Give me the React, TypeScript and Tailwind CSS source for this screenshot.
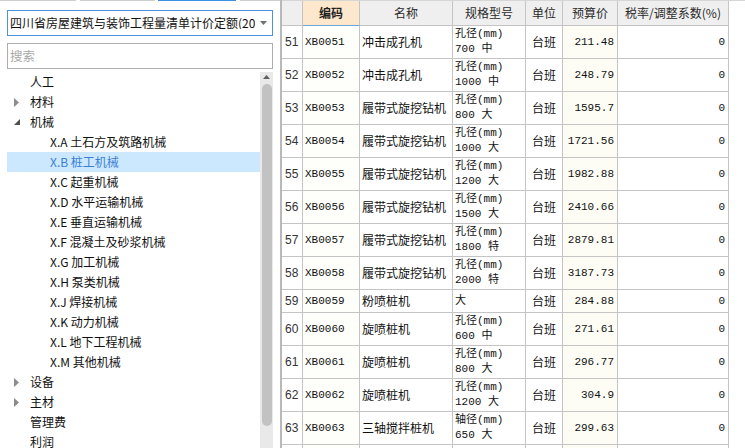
import React from "react";

const cjk = "font-['Noto_Sans_CJK_SC',sans-serif]";
const mono = "font-['Liberation_Mono','Noto_Sans_CJK_SC',monospace]";

type TreeItem = { label: string; level: 1 | 2; arrow?: "closed" | "open"; selected?: boolean };

const tree: TreeItem[] = [
  { label: "人工", level: 1 },
  { label: "材料", level: 1, arrow: "closed" },
  { label: "机械", level: 1, arrow: "open" },
  { label: "X.A 土石方及筑路机械", level: 2 },
  { label: "X.B 桩工机械", level: 2, selected: true },
  { label: "X.C 起重机械", level: 2 },
  { label: "X.D 水平运输机械", level: 2 },
  { label: "X.E 垂直运输机械", level: 2 },
  { label: "X.F 混凝土及砂浆机械", level: 2 },
  { label: "X.G 加工机械", level: 2 },
  { label: "X.H 泵类机械", level: 2 },
  { label: "X.J 焊接机械", level: 2 },
  { label: "X.K 动力机械", level: 2 },
  { label: "X.L 地下工程机械", level: 2 },
  { label: "X.M 其他机械", level: 2 },
  { label: "设备", level: 1, arrow: "closed" },
  { label: "主材", level: 1, arrow: "closed" },
  { label: "管理费", level: 1 },
  { label: "利润", level: 1 },
];

type Row = { no: number; code: string; name: string; spec: string[]; price: string };

const rows: Row[] = [
  { no: 51, code: "XB0051", name: "冲击成孔机", spec: ["孔径(mm)", "700 中"], price: "211.48" },
  { no: 52, code: "XB0052", name: "冲击成孔机", spec: ["孔径(mm)", "1000 中"], price: "248.79" },
  { no: 53, code: "XB0053", name: "履带式旋挖钻机", spec: ["孔径(mm)", "800 大"], price: "1595.7" },
  { no: 54, code: "XB0054", name: "履带式旋挖钻机", spec: ["孔径(mm)", "1000 大"], price: "1721.56" },
  { no: 55, code: "XB0055", name: "履带式旋挖钻机", spec: ["孔径(mm)", "1200 大"], price: "1982.88" },
  { no: 56, code: "XB0056", name: "履带式旋挖钻机", spec: ["孔径(mm)", "1500 大"], price: "2410.66" },
  { no: 57, code: "XB0057", name: "履带式旋挖钻机", spec: ["孔径(mm)", "1800 特"], price: "2879.81" },
  { no: 58, code: "XB0058", name: "履带式旋挖钻机", spec: ["孔径(mm)", "2000 特"], price: "3187.73" },
  { no: 59, code: "XB0059", name: "粉喷桩机", spec: ["大"], price: "284.88" },
  { no: 60, code: "XB0060", name: "旋喷桩机", spec: ["孔径(mm)", "600 中"], price: "271.61" },
  { no: 61, code: "XB0061", name: "旋喷桩机", spec: ["孔径(mm)", "800 大"], price: "296.77" },
  { no: 62, code: "XB0062", name: "旋喷桩机", spec: ["孔径(mm)", "1200 大"], price: "304.9" },
  { no: 63, code: "XB0063", name: "三轴搅拌桩机", spec: ["轴径(mm)", "650 大"], price: "299.63" },
];

const cols = "grid grid-cols-[21px_57px_93px_73px_37px_55px_111px]";
const cell = "border-r border-b border-[#c4c4c4] overflow-hidden whitespace-nowrap";

function Arrow({ kind }: { kind: "closed" | "open" }) {
  if (kind === "closed") {
    return (
      <svg width="5" height="9" viewBox="0 0 5 9" className="block">
        <path d="M0 0 L5 4.5 L0 9 Z" fill="#8c8c8c" />
      </svg>
    );
  }
  return (
    <svg width="6" height="6" viewBox="0 0 6 6" className="block">
      <path d="M6 0 L6 6 L0 6 Z" fill="#505050" />
    </svg>
  );
}

function Sidebar() {
  return (
    <aside className={`flex w-[280px] shrink-0 flex-col ${cjk}`}>
      <div className="flex h-px shrink-0">
        <div className="w-[76px] bg-[#cfcfcf]" />
        <div className="ml-[4px] w-[75px] bg-[#cfcfcf]" />
        <div className="ml-[3px] w-[78px] bg-[#3d8fe4]" />
        <div className="ml-[4px] flex-1 bg-[#cfcfcf]" />
      </div>
      <div className="px-[7px] pt-[9px]">
        <div className="flex h-[26px] items-center border border-[#4d93dc] bg-white pl-[2px] pr-[5px]">
          <span className="flex-1 overflow-hidden whitespace-nowrap text-[12px] leading-none text-[#111]">
            四川省房屋建筑与装饰工程量清单计价定额(2015)
          </span>
          <svg width="7" height="4" viewBox="0 0 7 4" className="ml-[5px] shrink-0">
            <path d="M0 0 L7 0 L3.5 4 Z" fill="#707070" />
          </svg>
        </div>
        <div className="mt-[7px] flex h-[26px] items-center border border-[#adadad] pl-[2px] text-[12.5px] leading-none text-[#a8a8a8]">
          搜索
        </div>
      </div>
      <div className="mx-[7px] mt-[3px] flex min-h-0 flex-1">
        <ul className="flex-1 overflow-hidden">
          {tree.map((t) => (
            <li
              key={t.label}
              className={`flex h-[20px] items-center text-[12px] leading-none ${
                t.selected ? "bg-[#cce8ff] text-[#3a7fd5]" : "text-[#111]"
              }`}
            >
              {t.level === 1 ? (
                <>
                  <span className="flex w-[23px] shrink-0 items-center pl-[7px]">
                    {t.arrow ? <Arrow kind={t.arrow} /> : null}
                  </span>
                  <span>{t.label}</span>
                </>
              ) : (
                <span className="pl-[43px]">{t.label}</span>
              )}
            </li>
          ))}
        </ul>
        <div className="flex w-[13px] flex-col items-center bg-[#e9e9e9]">
          <svg width="7" height="4" viewBox="0 0 7 4" className="mt-[3px] shrink-0">
            <path d="M3.5 0 L7 4 L0 4 Z" fill="#606060" />
          </svg>
          <div className="mt-[5px] h-[342px] w-[10px] rounded-[5px] bg-[#c2c2c2]" />
        </div>
      </div>
    </aside>
  );
}

function Table() {
  const head = "flex items-center justify-center border-r border-b border-[#c4c4c4] bg-[#efefef] text-[12px] leading-none text-[#2a2a2a]";
  return (
    <main className={`flex-1 overflow-hidden border-l-2 border-[#b9b9b9] bg-white ${cjk}`}>
      <div className="border-t border-[#d6d6d6]">
        <div className={`${cols} h-[25px]`}>
          <div className={`${head} bg-[#ececec]`} />
          <div className="flex items-center justify-center border-r border-b border-r-[#c4c4c4] border-b-[#6ea6dc] bg-[#fde8cd] text-[12px] font-bold leading-none text-[#222]">
            编码
          </div>
          <div className={head}>名称</div>
          <div className={head}>规格型号</div>
          <div className={head}>单位</div>
          <div className={head}>预算价</div>
          <div className={head}>税率/调整系数(%)</div>
        </div>
        {rows.map((r) => (
          <div key={r.no} className={`${cols} ${r.spec.length > 1 ? "h-[33px]" : "h-[23px]"}`}>
            <div className={`${cell} flex items-center pl-[3px] font-['Liberation_Sans',sans-serif] text-[12px] text-[#333]`}>
              {r.no}
            </div>
            <div className={`${cell} flex items-center bg-[#fefefa] pl-[2px] ${mono} text-[11px] text-[#111]`}>
              {r.code}
            </div>
            <div className={`${cell} flex items-center pl-[2px] text-[12px] leading-none text-[#111]`}>{r.name}</div>
            <div className={`${cell} flex flex-col justify-center pl-[2px] ${mono} text-[11px] leading-[15px] text-[#111]`}>
              {r.spec.map((s) => (
                <span key={s}>{s}</span>
              ))}
            </div>
            <div className={`${cell} flex items-center justify-center text-[12px] leading-none text-[#111]`}>台班</div>
            <div className={`${cell} flex items-center justify-end bg-[#fdfdf6] pr-[3px] ${mono} text-[11px] text-[#111]`}>
              {r.price}
            </div>
            <div className={`${cell} flex items-center justify-end pr-[3px] ${mono} text-[11px] text-[#111]`}>0</div>
          </div>
        ))}
        <div className={`${cols} h-[33px]`}>
          <div className={cell} />
          <div className={`${cell} bg-[#fefefa]`} />
          <div className={cell} />
          <div className={cell} />
          <div className={cell} />
          <div className={`${cell} bg-[#fdfdf6]`} />
          <div className={cell} />
        </div>
      </div>
    </main>
  );
}

export default function App() {
  return (
    <div className="flex h-[448px] w-[745px] overflow-hidden bg-white">
      <Sidebar />
      <Table />
    </div>
  );
}
